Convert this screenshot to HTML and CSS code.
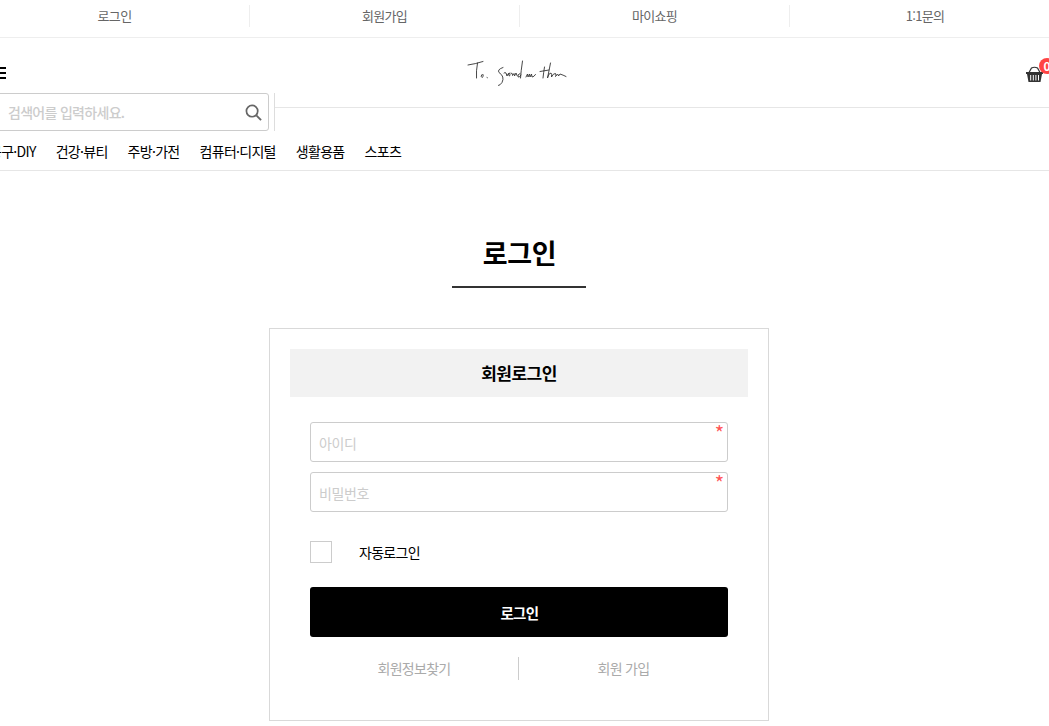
FILE: index.html
```html
<!DOCTYPE html>
<html lang="ko">
<head>
<meta charset="utf-8">
<title>로그인</title>
<link rel="stylesheet" href="styles.css">
</head>
<body>
<header class="site-header">
  <nav class="util-bar">
    <a class="util-link" href="#">로그인</a>
    <a class="util-link" href="#">회원가입</a>
    <a class="util-link" href="#">마이쇼핑</a>
    <a class="util-link" href="#">1:1문의</a>
  </nav>
  <div class="brand-row">
    <button class="menu-btn" aria-label="메뉴"><span></span><span></span><span></span></button>
    <svg class="logo" role="img" aria-label="logo" viewBox="0 0 110 36" width="110" height="36">
      <g fill="none" stroke="#333" stroke-width=".9" stroke-linecap="round" stroke-linejoin="round">
        <path d="M5 10 Q12 9 20 6.500"/>
        <path d="M14.500 8 Q13 16 13.500 23"/>
        <path d="M19 19.500 q-2 2 0 3 q2-.5 1-3 M24 22.500 l.4 .2"/>
        <path d="M40 12.500 q-6 2-4 5 q6 4 3 10 q-2 3-3.500 3 M41 18 q1-1 2 0 l1 3 q1-3 2.500-3 q1 2 0 3 q-1 0-1-2 M48 18 q2 0 1.500 2.500 l1.500-2 l.5 2.500 l1.500-3 l1 2.500"/>
        <path d="M59.500 6 Q58 16 57.500 23 M57 18.500 q-3 1-2 3.500 q2 .5 3-2"/>
        <path d="M63 22 l1.500-3 l.5 3 l1.500-3 l.5 3 l1.500-3 l.5 3 q2 0 3.500-2.500"/>
        <path d="M81.500 12 Q80.500 18 80 23 M77 16.500 L86 15"/>
        <path d="M87.500 8 Q86 16 84.500 23 q1-5 3.500-5 q1 1 .5 4 q2-4 4-3.500 q1 2 0 3 l2-2.500 q1 1 1 2 l1.500-2 q3 1 6 2.500"/>
      </g>
    </svg>
    <a class="cart" href="#" aria-label="장바구니">
      <svg class="cart-icon" viewBox="0 0 17 16" width="17" height="16">
        <path d="M3 6.500 L5.500 2 Q8.500 .5 11.500 2 L14 6.500" fill="none" stroke="#333" stroke-width="1.200"/>
        <path d="M0 6 H17 V8 H16 L14.500 16 H2.500 L1 8 H0 Z" fill="#333"/>
        <path d="M4.700 9 V14.500 M7.300 9 V14.500 M9.900 9 V14.500 M12.500 9 V14.500" stroke="#fff" stroke-width="1"/>
      </svg>
      <span class="cart-badge">0</span>
    </a>
  </div>
  <div class="search-row">
    <form class="search-box">
      <input class="search-input" type="text" placeholder="검색어를 입력하세요.">
      <svg class="search-icon" viewBox="0 0 18 18" width="17" height="17">
        <circle cx="7.500" cy="7.500" r="6" fill="none" stroke="#666" stroke-width="1.800"/>
        <path d="M12 12 L17 17" stroke="#666" stroke-width="2"/>
      </svg>
    </form>
    <div class="search-rule"><div class="search-rule-line"></div></div>
  </div>
  <nav class="cat-nav">
    <a class="cat-link" href="#">공구·DIY</a>
    <a class="cat-link" href="#">건강·뷰티</a>
    <a class="cat-link" href="#">주방·가전</a>
    <a class="cat-link" href="#">컴퓨터·디지털</a>
    <a class="cat-link" href="#">생활용품</a>
    <a class="cat-link" href="#">스포츠</a>
  </nav>
</header>
<main class="content">
  <h1 class="page-title">로그인</h1>
  <section class="login-card">
    <h2 class="card-head">회원로그인</h2>
    <form class="login-form">
      <div class="field"><input class="field-input" type="text" placeholder="아이디"><span class="req">*</span></div>
      <div class="field"><input class="field-input" type="password" placeholder="비밀번호"><span class="req">*</span></div>
      <label class="auto-login"><span class="check"></span><span>자동로그인</span></label>
      <button class="submit" type="button">로그인</button>
      <div class="sub-links">
        <a class="sub-link" href="#">회원정보찾기</a>
        <a class="sub-link" href="#">회원 가입</a>
      </div>
    </form>
  </section>
</main>
</body>
</html>
```

FILE: styles.css
```css
* { box-sizing: border-box; }
html, body { margin: 0; padding: 0; overflow: hidden; height: 726px; background: #fff; }
body { font-family: "Noto Sans CJK KR", "Noto Sans", sans-serif; color: #000; font-size: 14px; }
a { text-decoration: none; color: inherit; }

.site-header { width: 1049px; }
.util-bar { display: flex; height: 37px; margin-left: -20px; width: 1080px; padding-top: 5px; }
.util-link { flex: 0 0 270px; height: 22px; line-height: 22px; text-align: center; font-size: 13px; letter-spacing: -.7px; color: #666; border-right: 1px solid #eee; }
.util-link:last-child { border-right: 0; }
.brand-row { display: flex; align-items: center; justify-content: space-between; height: 56px; margin-left: -15px; padding-top: 15px; border-top: 1px solid #eee; }
.menu-btn { display: flex; flex-direction: column; gap: 3px; width: 21px; padding: 0; border: 0; background: none; }
.menu-btn span { display: block; height: 2px; background: #000; }
.logo { display: block; margin-left: 4px; }
.cart { position: relative; display: flex; align-items: flex-end; width: 23px; height: 18px; }
.cart-icon { display: block; }
.cart-badge { position: absolute; left: 13px; top: -6px; width: 16px; height: 16px; line-height: 15px; border-radius: 50%; background: #f44; color: #fff; font-size: 12px; font-weight: 700; text-align: center; }

.search-row { display: flex; height: 38px; }
.search-box { display: flex; align-items: center; width: 289px; height: 38px; margin-left: -20px; padding: 0 6px 0 27px; border: 1px solid #ccc; border-radius: 3px; }
.search-input { flex: 1; min-width: 0; border: 0; outline: 0; padding: 0; font: 500 14px "Noto Sans CJK KR", sans-serif; letter-spacing: -.7px; }
.search-input::placeholder { color: #ccc; opacity: 1; }
.search-icon { display: block; }
.search-rule { flex: 1; margin-left: 5px; border-left: 1px solid #ddd; }
.search-rule-line { height: 15px; border-bottom: 1px solid #e6e6e6; }

.cat-nav { display: flex; gap: 20px; height: 40px; margin-left: -11px; align-items: center; border-bottom: 1px solid #e6e6e6; width: 1060px; }
.cat-link { font-size: 14px; letter-spacing: -.7px; color: #000; }

.content { width: 1038px; display: flex; flex-direction: column; align-items: center; }
.page-title { width: 134px; height: 117px; margin: 0; padding: 59px 0 0 1px; line-height: 46px; font-size: 27px; font-weight: 700; text-align: center; letter-spacing: -.4px; border-bottom: 2px solid #333; }
.login-card { width: 500px; height: 393px; margin-top: 40px; padding: 20px; border: 1px solid #d9d9d9; }
.card-head { height: 48px; margin: 0; line-height: 48px; background: #f2f2f2; text-align: center; font-size: 17px; font-weight: 700; letter-spacing: -.5px; }
.login-form { display: flex; flex-direction: column; padding: 25px 20px 0; }
.field { position: relative; height: 40px; margin-bottom: 10px; }
.field-input { display: block; width: 100%; height: 40px; padding: 1px 8px 0; border: 1px solid #ccc; border-radius: 3px; outline: 0; font: 400 14px "Noto Sans CJK KR", sans-serif; letter-spacing: -.4px; }
.field-input::placeholder { color: #ccc; opacity: 1; }
.req { position: absolute; top: 1px; right: 4px; line-height: 20px; color: #f55; font-size: 20px; font-weight: 400; }
.auto-login { display: flex; align-items: center; gap: 27px; height: 22px; margin-top: 19px; font-size: 14px; letter-spacing: -.7px; }
.check { display: block; width: 22px; height: 22px; border: 1px solid #ccc; }
.submit { height: 50px; margin-top: 24px; padding: 0 0 0 1px; border: 0; border-radius: 3px; background: #000; color: #fff; font: 700 14.500px "Noto Sans CJK KR", sans-serif; letter-spacing: -.6px; }
.sub-links { display: flex; margin-top: 20px; height: 23px; }
.sub-link { flex: 1; line-height: 22px; text-align: center; font-size: 14px; letter-spacing: -.7px; color: #aaa; }
.sub-link:first-child { flex: 0 0 209px; border-right: 1px solid #ccc; }
```
